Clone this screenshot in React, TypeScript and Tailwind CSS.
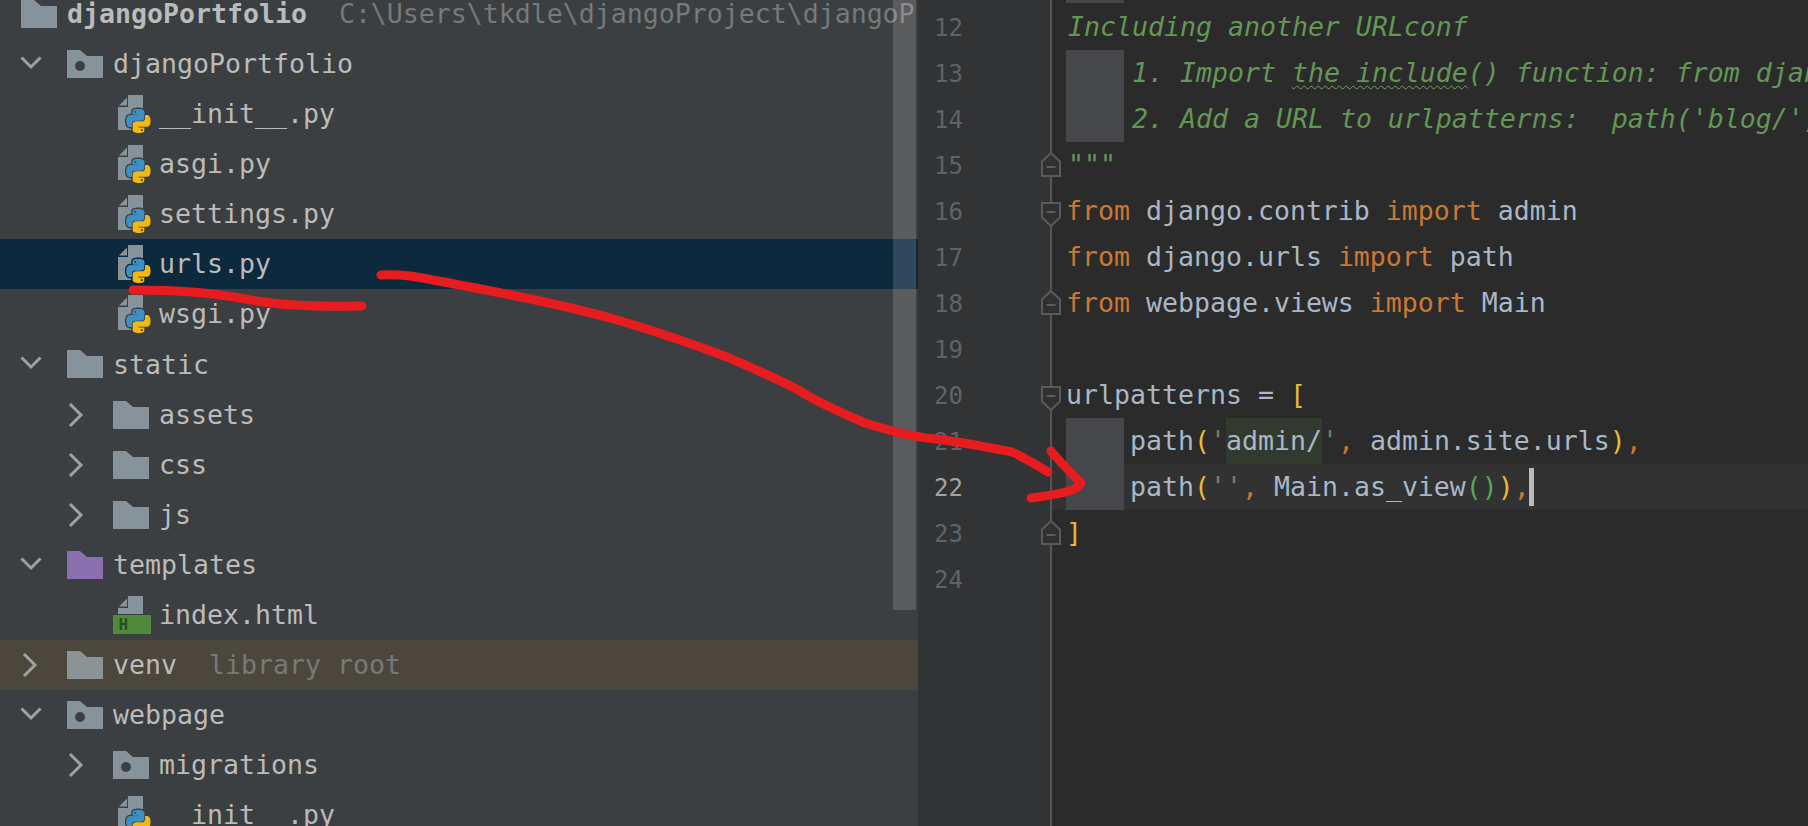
import React from 'react';

const PY_BLUE = "M14.25.18l.9.2.73.26.59.3.45.32.34.34.25.34.16.33.1.3.04.26.02.2-.01.13V8.5l-.05.63-.13.55-.21.46-.26.38-.3.31-.33.25-.35.19-.35.14-.33.1-.3.07-.26.04-.21.02H8.77l-.69.05-.59.14-.5.22-.41.27-.33.32-.27.35-.2.36-.15.37-.1.35-.07.32-.04.27-.02.21v3.06H3.17l-.21-.03-.28-.07-.32-.12-.35-.18-.36-.26-.36-.36-.35-.46-.32-.59-.28-.73-.21-.88-.14-1.05-.05-1.23.06-1.22.16-1.04.24-.87.32-.71.36-.57.4-.44.42-.33.42-.24.4-.16.36-.1.32-.05.24-.01h.16l.06.01h8.16v-.83H6.18l-.01-2.75-.02-.37.05-.34.11-.31.17-.28.25-.26.31-.23.38-.2.44-.18.51-.15.58-.12.64-.1.71-.06.77-.04.84-.02 1.27.05zm-6.3 1.98l-.23.33-.08.41.08.41.23.34.33.22.41.09.41-.09.33-.22.23-.34.08-.41-.08-.41-.23-.33-.33-.22-.41-.09-.41.09z";
const PY_YELLOW = "M21.04 6.11l.28.06.32.12.35.18.36.27.36.35.35.47.32.59.28.73.21.88.14 1.04.05 1.23-.06 1.23-.16 1.04-.24.86-.32.71-.36.57-.4.45-.42.33-.42.24-.4.16-.36.09-.32.05-.24.02-.16-.01h-8.22v.82h5.84l.01 2.76.02.36-.05.34-.11.31-.17.29-.25.25-.31.24-.38.2-.44.17-.51.15-.58.13-.64.09-.71.07-.77.04-.84.01-1.27-.04-1.07-.14-.9-.2-.73-.25-.59-.3-.45-.33-.34-.34-.25-.34-.16-.33-.1-.3-.04-.25-.02-.2.01-.13v-5.34l.05-.64.13-.54.21-.46.26-.38.3-.32.33-.24.35-.2.35-.14.33-.1.3-.06.26-.04.21-.02.13-.01h5.84l.69-.05.59-.14.5-.21.41-.28.33-.32.27-.35.2-.36.15-.36.1-.35.07-.32.04-.28.02-.21V6.07h2.09l.14.01zm-6.47 14.25l-.23.33-.08.41.08.41.23.33.33.23.41.08.41-.08.33-.23.23-.33.08-.41-.08-.41-.23-.33-.33-.23-.41-.08-.41.08z";

const MONO = "font-['DejaVu_Sans_Mono','Liberation_Mono',monospace] text-[26.57px] whitespace-pre";

const Chevron = ({ open }: { open: boolean }) => (
  <svg width="22" height="26" viewBox="0 0 22 26" className="shrink-0">
    {open
      ? <polyline points="1.5,6.5 11,16 20.5,6.5" fill="none" stroke="#a0a0a0" strokeWidth="3" />
      : <polyline points="4,2 15,13 4,24" fill="none" stroke="#a0a0a0" strokeWidth="3" />}
  </svg>
);

const Folder = ({ color = '#87939a', dot = false }: { color?: string; dot?: boolean }) => (
  <svg width="36" height="28" viewBox="0 0 36 28" className="shrink-0">
    <path d="M0 0H13L20 6H36V28H0Z" fill={color} />
    {dot && <circle cx="13" cy="16" r="5" fill="#3c3f41" />}
  </svg>
);

const PyFile = ({ halo }: { halo: string }) => (
  <svg width="38" height="38" viewBox="0 0 38 38" className="shrink-0">
    <path d="M15 0H30V35H5V12H15Z" fill="#87939a" />
    <path d="M6 10.5L14 2.5V10.5Z" fill="#87939a" />
    <g transform="translate(13.5 14)">
      <path d={PY_BLUE} fill="#3d8fc4" stroke={halo} strokeWidth="3" paintOrder="stroke" fillRule="evenodd" />
      <path d={PY_YELLOW} fill="#f0b912" stroke={halo} strokeWidth="3" paintOrder="stroke" fillRule="evenodd" />
      <path d={PY_BLUE} fill="#3d8fc4" fillRule="evenodd" />
    </g>
  </svg>
);

const HtmlFile = () => (
  <svg width="38" height="38" viewBox="0 0 38 38" className="shrink-0">
    <path d="M15 0H30V18H5V12H15Z" fill="#87939a" />
    <path d="M6 10.5L14 2.5V10.5Z" fill="#87939a" />
    <rect x="0" y="19" width="38" height="19" fill="#4f8a3b" />
    <text x="5.5" y="34" fontFamily="'DejaVu Sans Mono'" fontWeight="700" fontSize="16" fill="#2a4a22">H</text>
  </svg>
);

const rowCls = "h-[50.07px] flex items-center shrink-0";

const FolderRow = ({ name, level, open, color, dot, bg, hint }: {
  name: string; level: 0 | 1; open: boolean; color?: string; dot?: boolean; bg?: string; hint?: string;
}) => (
  <div className={`${rowCls} ${level === 0 ? 'pl-[20px]' : 'pl-[66px]'} ${bg ?? ''}`}>
    <Chevron open={open} />
    <div className="ml-[25px] mr-[10px] flex"><Folder color={color} dot={dot} /></div>
    <span>{name}</span>
    {hint && <span className="ml-[32px] text-[#787878]">{hint}</span>}
  </div>
);

const FileRow = ({ name, selected }: { name: string; selected?: boolean }) => (
  <div className={`${rowCls} pl-[113px] ${selected ? 'bg-[#0d293e]' : ''}`}>
    <PyFile halo={selected ? '#0d293e' : '#3c3f41'} />
    <span className="ml-[8px]">{name}</span>
  </div>
);

const ProjectTree = () => (
  <div className={`relative w-[918px] shrink-0 h-full overflow-hidden bg-[#3c3f41] text-[#bbbbbb] ${MONO}`}>
    <div className="-mt-[11px] flex flex-col">
      <div className={`${rowCls} w-[916px] overflow-hidden pl-[21px]`}>
        <div className="mr-[10px] flex"><Folder /></div>
        <span className="font-bold">djangoPortfolio</span>
        <span className="ml-[32px] text-[#787878]">C:\Users\tkdle\djangoProject\djangoPortfolio</span>
      </div>
      <FolderRow name="djangoPortfolio" level={0} open dot />
      <FileRow name="__init__.py" />
      <FileRow name="asgi.py" />
      <FileRow name="settings.py" />
      <FileRow name="urls.py" selected />
      <FileRow name="wsgi.py" />
      <FolderRow name="static" level={0} open />
      <FolderRow name="assets" level={1} open={false} />
      <FolderRow name="css" level={1} open={false} />
      <FolderRow name="js" level={1} open={false} />
      <FolderRow name="templates" level={0} open color="#8a70ae" />
      <div className={`${rowCls} pl-[113px]`}>
        <HtmlFile />
        <span className="ml-[8px]">index.html</span>
      </div>
      <FolderRow name="venv" level={0} open={false} bg="bg-[#4c473d]" hint="library root" color="#8c9397" />
      <FolderRow name="webpage" level={0} open dot />
      <FolderRow name="migrations" level={1} open={false} dot />
      <FileRow name="__init__.py" />
    </div>
    {/* overlay scrollbar */}
    <div className="absolute left-[893px] top-0 w-[23px] h-[610px] bg-white/15" />
  </div>
);

const FoldMark = ({ dir }: { dir: 'up' | 'down' }) => (
  <svg
    width="20"
    height="25"
    viewBox="0 0 20 25"
    className={`absolute left-[123px] z-10 ${dir === 'up' ? 'top-[10px]' : 'top-[14px]'}`}
  >
    {dir === 'up'
      ? <polygon points="1,24 1,9.5 10,1 19,9.5 19,24" fill="#2e3031" stroke="#5a5a5a" strokeWidth="2" />
      : <polygon points="1,1 19,1 19,15.5 10,24 1,15.5" fill="#2e3031" stroke="#5a5a5a" strokeWidth="2" />}
    <line x1="5.5" x2="14.5" y1={dir === 'up' ? 15 : 10} y2={dir === 'up' ? 15 : 10} stroke="#5a5a5a" strokeWidth="2" />
  </svg>
);

const Line = ({ no, fold, current, children }: {
  no: number; fold?: 'up' | 'down'; current?: boolean; children?: React.ReactNode;
}) => (
  <div className="flex h-[46px] shrink-0">
    <div className="relative w-[132px] shrink-0 bg-[#313335] pr-[87px] text-right leading-[46px]">
      <span className={`font-['DejaVu_Sans_Mono',monospace] text-[24px] ${current ? 'text-[#a4a3a3]' : 'text-[#606366]'}`}>{no}</span>
      {fold && <FoldMark dir={fold} />}
    </div>
    <div className={`flex-1 min-w-0 overflow-hidden border-l-2 border-[#555555] pl-[14px] leading-[46px] ${current ? 'bg-[#323232]' : ''}`}>
      {children}
    </div>
  </div>
);

const Indent = () => <span className="inline-block align-top w-[58px] h-[46px] mr-[6px] bg-[#46474b]" />;
const Kw = ({ children }: { children: React.ReactNode }) => <span className="text-[#cc7832]">{children}</span>;
const Com = ({ children }: { children: React.ReactNode }) => <span className="ml-[2px] italic text-[#629755]">{children}</span>;
const Yel = ({ children }: { children: React.ReactNode }) => <span className="text-[#e8ba36]">{children}</span>;
const Str = ({ children }: { children: React.ReactNode }) => <span className="text-[#6a8759]">{children}</span>;

const Editor = () => (
  <div className={`flex-1 min-w-0 h-full flex flex-col overflow-hidden bg-[#2b2b2b] text-[#a9b7c6] ${MONO}`}>
    <div className="flex h-[4px] shrink-0">
      <div className="w-[132px] bg-[#313335]" />
      <div className="flex-1 border-l-2 border-[#555555] pl-[14px]"><div className="w-[58px] h-[3px] bg-[#46474b]" /></div>
    </div>
    <Line no={12}><Com>Including another URLconf</Com></Line>
    <Line no={13}>
      <Indent />
      <Com>1. Import <span className="underline decoration-wavy decoration-1 decoration-[#6f9e66] underline-offset-[3px]">the include</span>() function: from django.urls import include, path</Com>
    </Line>
    <Line no={14}><Indent /><Com>2. Add a URL to urlpatterns:  path('blog/', include('blog.urls'))</Com></Line>
    <Line no={15} fold="up"><Com>"""</Com></Line>
    <Line no={16} fold="down"><Kw>from</Kw> django.contrib <Kw>import</Kw> admin</Line>
    <Line no={17}><Kw>from</Kw> django.urls <Kw>import</Kw> path</Line>
    <Line no={18} fold="up"><Kw>from</Kw> webpage.views <Kw>import</Kw> Main</Line>
    <Line no={19} />
    <Line no={20} fold="down">urlpatterns = <Yel>[</Yel></Line>
    <Line no={21}>
      <Indent />path<Yel>(</Yel><Str>'</Str><span className="inline-block align-top h-[46px] bg-[#32392f] text-[#a9b7c6]">admin/</span><Str>'</Str><Kw>,</Kw> admin.site.urls<Yel>)</Yel><Kw>,</Kw>
    </Line>
    <Line no={22} current>
      <Indent />path<Yel>(</Yel><Str>''</Str><Kw>,</Kw> Main.as_view<span className="text-[#54a857]">()</span><Yel>)</Yel><Kw>,</Kw>
      <span className="inline-block align-top w-[5px] h-[38px] mt-[4px] -ml-[1px] bg-[#bbbbbb]" />
    </Line>
    <Line no={23} fold="up"><Yel>]</Yel></Line>
    <Line no={24} />
    <div className="flex flex-1">
      <div className="w-[132px] bg-[#313335]" />
      <div className="flex-1 border-l-2 border-[#555555]" />
    </div>
  </div>
);

export default function App() {
  return (
    <div className="relative flex w-[1808px] h-[826px] overflow-hidden">
      <ProjectTree />
      <Editor />
      {/* hand-drawn red annotation on top of the screenshot */}
      <svg width="1808" height="826" viewBox="0 0 1808 826" className="absolute inset-0 z-20 pointer-events-none">
        <g fill="none" stroke="#e71c1e" strokeWidth="9" strokeLinecap="round" strokeLinejoin="round">
          <path d="M381 275C395 274 410 275 433 280C461 285 491 291 521 297C555 304 590 312 624 322C658 332 692 344 727 357C759 371 792 385 805 394C819 403 842 413 865 423C888 430 911 437 936 439C961 442 986 447 1012 452C1025 458 1037 465 1048 472" />
          <path d="M1051 451C1060 462 1070 472 1081 483C1078 491 1060 494 1031 498" />
          <path d="M133 290C170 290 210 292 245 299C280 306 320 307 362 306" />
        </g>
      </svg>
    </div>
  );
}
